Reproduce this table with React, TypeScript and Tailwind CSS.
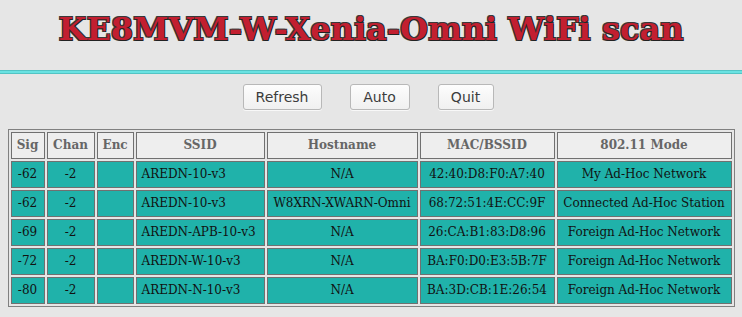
import React from 'react';

type Station = {
  sig: number;
  chan: number;
  enc: string;
  ssid: string;
  hostname: string;
  mac: string;
  mode: string;
};

const stations: Station[] = [
  { sig: -62, chan: -2, enc: '', ssid: 'AREDN-10-v3', hostname: 'N/A', mac: '42:40:D8:F0:A7:40', mode: 'My Ad-Hoc Network' },
  { sig: -62, chan: -2, enc: '', ssid: 'AREDN-10-v3', hostname: 'W8XRN-XWARN-Omni', mac: '68:72:51:4E:CC:9F', mode: 'Connected Ad-Hoc Station' },
  { sig: -69, chan: -2, enc: '', ssid: 'AREDN-APB-10-v3', hostname: 'N/A', mac: '26:CA:B1:83:D8:96', mode: 'Foreign Ad-Hoc Network' },
  { sig: -72, chan: -2, enc: '', ssid: 'AREDN-W-10-v3', hostname: 'N/A', mac: 'BA:F0:D0:E3:5B:7F', mode: 'Foreign Ad-Hoc Network' },
  { sig: -80, chan: -2, enc: '', ssid: 'AREDN-N-10-v3', hostname: 'N/A', mac: 'BA:3D:CB:1E:26:54', mode: 'Foreign Ad-Hoc Network' },
];

const th =
  'border border-[#707070] bg-[#eeeeee] px-[5px] py-[4px] leading-[17px] font-bold text-[#666666] text-center';
const td = 'border border-[#707070] bg-[#20b2aa] px-[5px] py-[4px] leading-[17px] text-[#111111]';
const btn =
  'h-[26px] rounded-[3px] border border-[#b8b8b8] bg-gradient-to-b from-[#fdfdfd] to-[#f0f0f0] text-[14px] text-[#3c3c3c] [font-family:"DejaVu_Sans",sans-serif] shadow-[0_1px_0_#f8f8f8]';

export default function App() {
  return (
    <div className="min-h-screen bg-[#e6e6e6] [font-family:'DejaVu_Serif',serif]">
      {/* title */}
      <div className="h-[70px] pt-[9px] text-center">
        <h1 className="text-[32px] leading-[40px] font-bold text-[#c21f30] [text-shadow:1px_1px_0_#222,-1px_-1px_0_#3a3a3a,1px_-1px_0_#333,-1px_1px_0_#333]">
          KE8MVM-W-Xenia-Omni WiFi scan
        </h1>
      </div>
      <div className="h-[4px] border-y border-[#52c4c4] bg-[#6ae2e2]" />

      {/* actions */}
      <div className="flex justify-center gap-[28px] pt-[10px] pr-[6px]">
        <button className={`${btn} w-[79px]`}>Refresh</button>
        <button className={`${btn} w-[60px]`}>Auto</button>
        <button className={`${btn} w-[56px]`}>Quit</button>
      </div>

      {/* scan results */}
      <div className="pt-[19px]">
        <table className="mx-auto w-[727px] table-fixed border-separate border-spacing-[2px] border border-[#808080] text-[12px]">
          <thead>
            <tr>
              <th className={`${th} w-[34px] px-0`}>Sig</th>
              <th className={`${th} w-[48px]`}>Chan</th>
              <th className={`${th} w-[37px] px-0`}>Enc</th>
              <th className={`${th} w-[129px]`}>SSID</th>
              <th className={`${th} w-[151px]`}>Hostname</th>
              <th className={`${th} w-[135px]`}>MAC/BSSID</th>
              <th className={`${th} w-[175px] px-0`}>802.11 Mode</th>
            </tr>
          </thead>
          <tbody>
            {stations.map((s, i) => (
              <tr key={i}>
                <td className={`${td} text-center px-0`}>{s.sig}</td>
                <td className={`${td} text-center`}>{s.chan}</td>
                <td className={`${td} text-center`}>{s.enc}</td>
                <td className={`${td} whitespace-nowrap`}>{s.ssid}</td>
                <td className={`${td} text-center whitespace-nowrap px-0`}>{s.hostname}</td>
                <td className={`${td} text-center whitespace-nowrap px-0`}>{s.mac}</td>
                <td className={`${td} text-center whitespace-nowrap px-0`}>{s.mode}</td>
              </tr>
            ))}
          </tbody>
        </table>
      </div>
    </div>
  );
}
